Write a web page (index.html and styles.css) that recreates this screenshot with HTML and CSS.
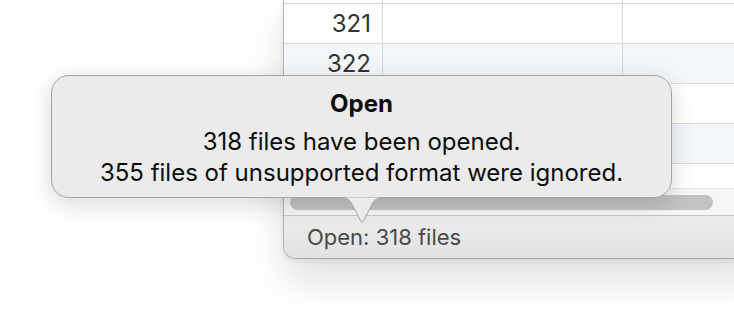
FILE: index.html
```html
<!DOCTYPE html>
<html>
<head>
<meta charset="utf-8">
<link rel="stylesheet" href="styles.css">
</head>
<body>
<div class="window">
  <div class="table">
    <div class="row row-white row-partial"><div class="cell num"></div><div class="cell"></div><div class="cell"></div></div>
    <div class="row row-white"><div class="cell num">321</div><div class="cell"></div><div class="cell"></div></div>
    <div class="row row-blue"><div class="cell num">322</div><div class="cell"></div><div class="cell"></div></div>
    <div class="row row-white"><div class="cell num"></div><div class="cell"></div><div class="cell"></div></div>
    <div class="row row-blue"><div class="cell num"></div><div class="cell"></div><div class="cell"></div></div>
    <div class="row row-white row-last"><div class="cell num"></div><div class="cell"></div><div class="cell"></div></div>
  </div>
  <div class="scroll-area"><div class="thumb"></div></div>
  <div class="status">Open: 318 files</div>
</div>
<div class="popover">
  <div class="pop-title">Open</div>
  <div class="pop-line">318 files have been opened.</div>
  <div class="pop-line">355 files of unsupported format were ignored.</div>
  <svg class="arrow" width="46" height="27" viewBox="0 0 46 27">
    <path d="M0 0.5 C7 0.5 9 1.5 12 5.5 L22 24.5 Q23 26 24 24.5 L34 5.5 C37 1.5 39 0.5 46 0.5 Z" fill="#ebebeb"/>
    <path d="M0 0.5 C7 0.5 9 1.5 12 5.5 L22 24.5 Q23 26 24 24.5 L34 5.5 C37 1.5 39 0.5 46 0.5" fill="none" stroke="#a6a6a6" stroke-width="1"/>
  </svg>
</div>
</body>
</html>
```

FILE: styles.css
```css
html, body {
  margin: 0;
  padding: 0;
  background: #ffffff;
  overflow: hidden;
}
body {
  width: 734px;
  height: 326px;
  position: relative;
  font-family: "Inter", "Liberation Sans", sans-serif;
}
.window {
  margin-left: 283px;
  width: 480px;
  height: 259px;
  box-sizing: border-box;
  border-left: 1px solid #b3b3b3;
  border-bottom: 1px solid #a8a8a8;
  border-bottom-left-radius: 13px;
  overflow: hidden;
  display: flex;
  flex-direction: column;
  box-shadow: 0 22px 40px rgba(0, 0, 0, 0.12), 0 2px 6px rgba(0, 0, 0, 0.08);
  background: #fff;
}
.table {
  display: flex;
  flex-direction: column;
}
.row {
  display: grid;
  grid-template-columns: 99px 240px 1fr;
  height: 40px;
  box-sizing: border-box;
  border-bottom: 1px solid #dadada;
}
.row-partial { height: 4px; }
.row-last { height: 24px; border-bottom: none; }
.row-white { background: #ffffff; }
.row-blue { background: #f3f6fb; }
.cell {
  border-right: 1px solid #d6d6d6;
}
.num {
  text-align: right;
  padding-right: 11px;
  font-size: 24px;
  line-height: 40px;
  color: #333333;
}
.scroll-area {
  height: 28px;
  box-sizing: border-box;
  border-top: 1px solid #e6e6e6;
  background: #f6f6f6;
  padding: 6px 0 0 6px;
}
.thumb {
  width: 423px;
  height: 15px;
  border-radius: 8px;
  background: #c3c3c3;
}
.status {
  flex: 1;
  border-top: 1px solid #c6c6c6;
  background: linear-gradient(#ececec, #e2e2e2);
  padding-left: 23px;
  font-size: 22px;
  line-height: 42px;
  color: #4a4a4a;
}
.popover {
  position: absolute;
  left: 51px;
  top: 75px;
  width: 621px;
  height: 123px;
  box-sizing: border-box;
  background: #ebebeb;
  border: 1px solid #a6a6a6;
  border-radius: 18px;
  box-shadow: 0 6px 24px rgba(0, 0, 0, 0.16);
  padding-top: 12px;
  text-align: center;
  color: #0d0d0d;
}
.pop-title {
  font-weight: 700;
  font-size: 24px;
  line-height: 31px;
  margin-bottom: 7px;
}
.pop-line {
  font-size: 24px;
  line-height: 31px;
}
.arrow {
  position: absolute;
  left: 287px;
  top: 121px;
  display: block;
}
```
